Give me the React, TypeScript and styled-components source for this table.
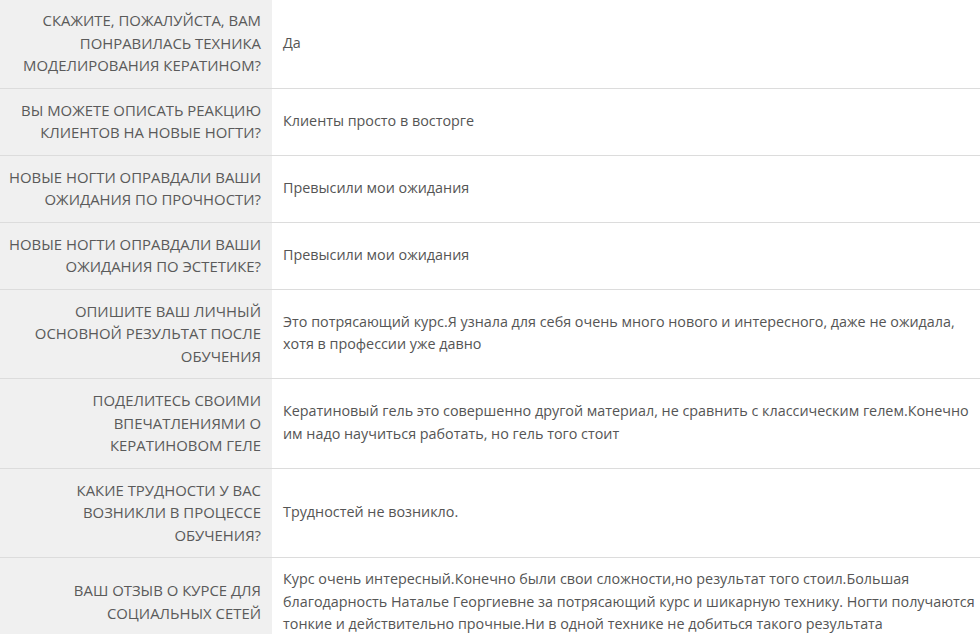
import styled, {createGlobalStyle} from 'styled-components'

const Global = createGlobalStyle`
    html, body {
        margin: 0;
        padding: 0;
        background: #fff;
    }
    body {
        font-family: "Open Sans", "Liberation Sans", sans-serif;
        color: #555;
    }
`;

const Table = styled.div`
    display: grid;
    grid-template-columns: 272px 1fr;
    width: 980px;
    margin-top: -1px;
`;

const Question = styled.div`
    background: #f0f0f0;
    text-align: right;
    text-transform: uppercase;
    font-size: 14.9px;
    line-height: 22.5px;
    color: #5a5a5a;
    padding: 10px 11px 11px 6px;
    border-bottom: 1px solid #dcdcdc;
    display: flex;
    align-items: center;
    justify-content: flex-end;
`;

const Answer = styled.div`
    font-size: 14.35px;
    line-height: 22.5px;
    color: #555;
    padding: 10px 3px 11px 11px;
    border-bottom: 1px solid #dcdcdc;
    display: flex;
    align-items: center;
`;

const rows: [string, string][] = [
    ['Скажите, пожалуйста, вам понравилась техника моделирования кератином?', 'Да'],
    ['Вы можете описать реакцию клиентов на новые ногти?', 'Клиенты просто в восторге'],
    ['Новые ногти оправдали ваши ожидания по прочности?', 'Превысили мои ожидания'],
    ['Новые ногти оправдали ваши ожидания по эстетике?', 'Превысили мои ожидания'],
    ['Опишите ваш личный основной результат после обучения', 'Это потрясающий курс.Я узнала для себя очень много нового и интересного, даже не ожидала, хотя в профессии уже давно'],
    ['Поделитесь своими впечатлениями о кератиновом геле', 'Кератиновый гель это совершенно другой материал, не сравнить с классическим гелем.Конечно им надо научиться работать, но гель того стоит'],
    ['Какие трудности у вас возникли в процессе обучения?', 'Трудностей не возникло.'],
    ['Ваш отзыв о курсе для социальных сетей', 'Курс очень интересный.Конечно были свои сложности,но результат того стоил.Большая благодарность Наталье Георгиевне за потрясающий курс и шикарную технику. Ногти получаются тонкие и действительно прочные.Ни в одной технике не добиться такого результата'],
];

export default function App() {
    return (
        <>
            <Global/>
            <Table>
                {rows.map(([q, a], i) => (
                    <Row key={i} q={q} a={a}/>
                ))}
            </Table>
        </>
    );
}

const Row = ({q, a}: {q: string, a: string}) =>
    <>
        <Question>{q}</Question>
        <Answer>{a}</Answer>
    </>;
